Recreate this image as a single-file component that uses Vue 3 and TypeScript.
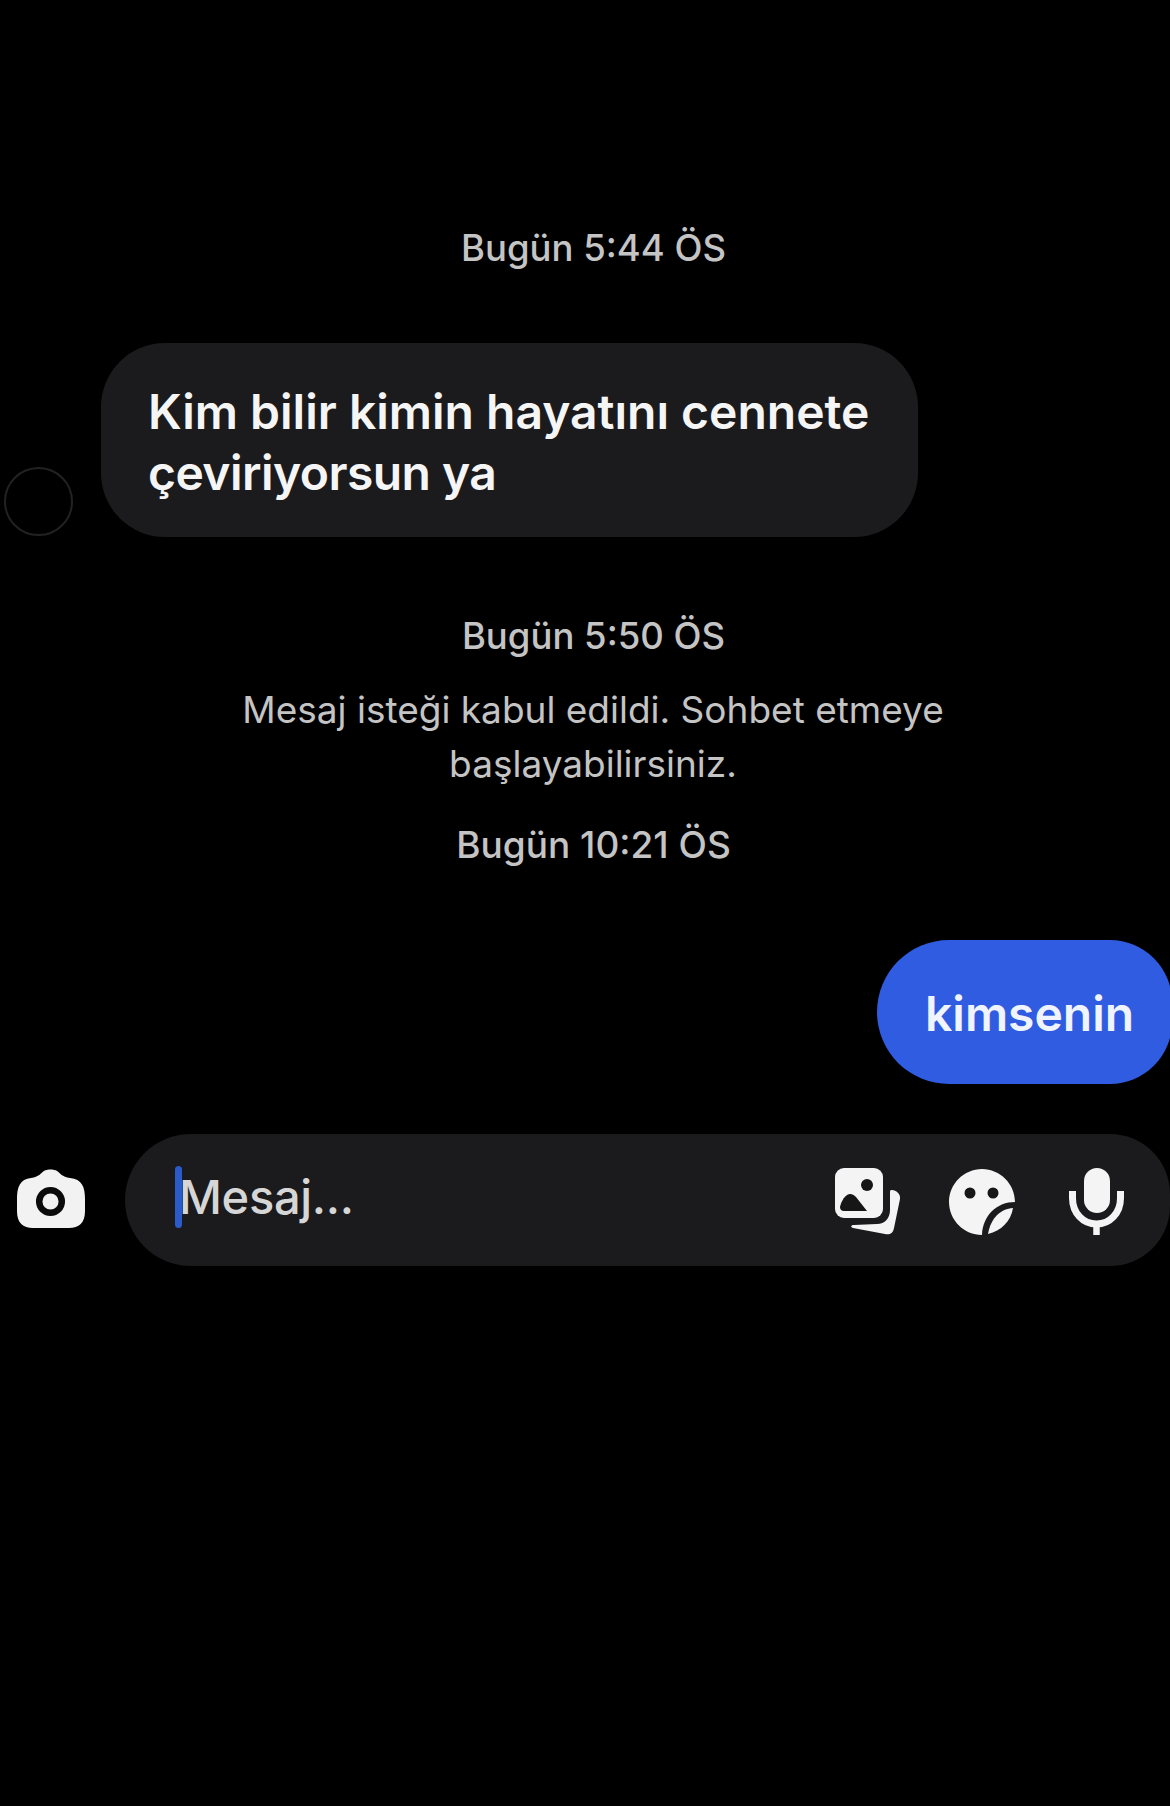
<template>
  <div class="chat">
    <div class="stamp first">Bugün 5:44 ÖS</div>

    <div class="incoming">
      <div class="avatar"></div>
      <div class="bubble">Kim bilir kimin hayatını cennete<br /><span class="tight">çeviriyorsun ya</span></div>
    </div>

    <div class="stamp second">Bugün 5:50 ÖS</div>
    <div class="notice">Mesaj isteği kabul edildi. Sohbet etmeye<br />başlayabilirsiniz.</div>
    <div class="stamp third">Bugün 10:21 ÖS</div>

    <div class="outgoing">
      <div class="bubble-out">kimsenin</div>
    </div>

    <div class="composer">
      <button class="camera" aria-label="Kamera">
        <svg width="68" height="60" viewBox="0 0 68 60">
          <path
            d="M0 30 C0 18 3 10 14 9 C22 8 24 4 27 2 C30 0 37 0 40 2 C43 4 45 8 53 9 C65 10 68 18 68 30 V42 C68 54 62 59 52 59 H16 C6 59 0 54 0 42 Z"
            fill="#f2f2f2"
          />
          <circle cx="33.500" cy="32.500" r="11.300" fill="#f2f2f2" stroke="#0b0b0b" stroke-width="6.500" />
        </svg>
      </button>
      <div class="field">
        <span class="caret"></span>
        <span class="placeholder">Mesaj...</span>
        <div class="actions">
          <svg class="gallery" width="66" height="68" viewBox="0 0 66 68">
            <path d="M57 22 C61 22 66 26 65 31 L59 60 C58 66 54 67 50 66 L18 60 C15 59 16 57 19 57 L42 56 C50 56 55 50 55 42 V24 C55 22 56 22 57 22 Z" fill="#f4f4f4" />
            <rect x="0" y="0" width="48" height="50" rx="9" fill="#f4f4f4" />
            <circle cx="32" cy="17" r="6" fill="#161616" />
            <path d="M5 39 C6 34 9 29 12 27 C15 25 18 26 21 29 L32 43 H9 C6 43 5 41 5 39 Z" fill="#161616" />
          </svg>
          <svg class="sticker" width="66" height="67" viewBox="0 0 66 67">
            <path d="M33 0 C51 0 66 15 66 33 C48 33 34 46 33 66 C15 66 0 51 0 33 C0 15 15 0 33 0 Z" fill="#f4f4f4" />
            <path d="M64 39 C52 40 42 48 39 65 C52 62 62 52 64 39 Z" fill="#f4f4f4" />
            <circle cx="21" cy="24" r="5.500" fill="#161616" />
            <circle cx="44" cy="24" r="5.500" fill="#161616" />
          </svg>
          <svg class="mic" width="56" height="68" viewBox="0 0 56 68">
            <rect x="15" y="0" width="26" height="45" rx="13" fill="#f4f4f4" />
            <path d="M3.500 23 V30 C3.500 45 14 56 27.500 56 C41 56 51.500 45 51.500 30 V23" fill="none" stroke="#f4f4f4" stroke-width="7" />
            <path d="M27.500 56 V67" stroke="#f4f4f4" stroke-width="6.500" />
          </svg>
        </div>
      </div>
    </div>
  </div>
</template>

<script setup lang="ts">
</script>

<style>
html,
body {
  background: #000;
}
</style>

<style scoped>
.chat {
  height: 1806px;
  overflow: hidden;
  background: #000;
  display: flex;
  flex-direction: column;
  font-family: Inter, "Noto Sans", sans-serif;
}

.stamp {
  text-align: center;
  font-size: 36.500px;
  line-height: 42px;
  color: #c4c4c4;
  font-weight: 500;
  padding-left: 17px;
}

.first {
  margin-top: 227px;
}

.incoming {
  display: flex;
  align-items: flex-end;
  margin-top: 74px;
  padding-left: 4px;
  gap: 28px;
}

.avatar {
  width: 69px;
  height: 69px;
  box-sizing: border-box;
  border: 2px solid #222;
  border-radius: 50%;
  margin-bottom: 1px;
}

.bubble {
  width: 817px;
  height: 194px;
  box-sizing: border-box;
  padding: 38px 0 0 47px;
  background: #1b1b1d;
  border-radius: 64px;
  color: #f5f5f5;
  font-size: 48px;
  line-height: 61px;
  font-weight: 600;
}

.tight {
  letter-spacing: -0.550px;
}

.second {
  margin-top: 78px;
}

.notice {
  margin-top: 26px;
  text-align: center;
  font-size: 37px;
  line-height: 54px;
  color: #c4c4c4;
  padding-left: 16px;
}

.third {
  margin-top: 33px;
  font-size: 37px;
}

.outgoing {
  display: flex;
  justify-content: flex-end;
  margin-top: 74px;
}

.bubble-out {
  width: 295px;
  height: 144px;
  margin-right: -2px;
  box-sizing: border-box;
  padding-left: 48px;
  background: #2f5ce0;
  border-radius: 72px 62px 62px 72px;
  color: #f0f4ff;
  font-size: 48px;
  line-height: 148px;
  font-weight: 600;
}

.composer {
  display: flex;
  align-items: center;
  margin-top: 50px;
  padding-left: 17px;
  gap: 40px;
}

.camera {
  display: flex;
  padding: 0;
  margin-top: -2px;
  border: 0;
  background: none;
}

.field {
  flex: 1;
  height: 132px;
  display: flex;
  align-items: center;
  background: #1b1b1d;
  border-radius: 66px 60px 60px 66px;
  padding-left: 50px;
  padding-right: 45px;
}

.caret {
  width: 7px;
  height: 62px;
  margin-top: -6px;
  border-radius: 4px;
  background: #2a5bc8;
}

.placeholder {
  font-size: 47px;
  line-height: 62px;
  margin-top: -6px;
  margin-left: -3px;
  color: #d6d6d6;
  font-weight: 500;
  letter-spacing: -0.300px;
}

.actions {
  margin-left: auto;
  margin-top: 4px;
  display: flex;
  align-items: center;
  gap: 48px;
}

.mic {
  margin-left: 6px;
}
</style>
